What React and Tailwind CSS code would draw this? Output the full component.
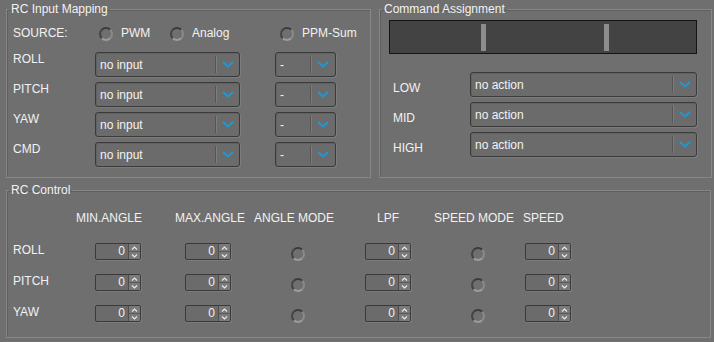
import React from 'react';

const font = { fontFamily: '"Liberation Sans", Arial, sans-serif' };

const Chevron = () => (
  <svg width="12" height="7" viewBox="0 0 12 7" className="block">
    <path d="M1 1 L6 5.5 L11 1" fill="none" stroke="#1c9ad8" strokeWidth="2" />
  </svg>
);

const Select = ({ value, w, arrowW = 23 }) => (
  <div className={`flex h-[25px] ${w} shrink-0 items-center rounded-[3px] border border-[#3a3a3a] bg-[#6b6b6b] shadow-[inset_1px_1px_0_#626262,1px_1px_0_#7c7c7c]`}>
    <span className="flex-1 truncate pl-[4px] pt-[1px] leading-[15px]">{value}</span>
    <div className="h-[17px] w-px bg-[#555] shadow-[1px_0_0_#7d7d7d]" />
    <div className="flex h-full items-center justify-center" style={{ width: arrowW }}>
      <Chevron />
    </div>
  </div>
);

const Radio = () => (
  <div className="h-[14px] w-[14px] shrink-0 rounded-full border-2 border-t-[#3c3c3c] border-l-[#444] border-r-[#8a8a8a] border-b-[#9c9c9c]" />
);

const Spin = () => (
  <div className="flex h-[17px] w-[46px] items-stretch rounded-[2px] border border-[#3a3a3a] bg-[#6b6b6b] shadow-[1px_1px_0_#7c7c7c]">
    <span className="flex-1 pr-[3px] text-right leading-[15px]">0</span>
    <div className="w-px bg-[#4e4e4e]" />
    <div className="flex w-[11px] flex-col">
      <div className="flex flex-1 items-center justify-center bg-[#7a7a7a] border-b border-[#5a5a5a]">
        <svg width="7" height="4" viewBox="0 0 7 4"><path d="M1 3.5 L3.5 1 L6 3.5" fill="none" stroke="#e8e8e8" strokeWidth="1.2" /></svg>
      </div>
      <div className="flex flex-1 items-center justify-center bg-[#7a7a7a]">
        <svg width="7" height="4" viewBox="0 0 7 4"><path d="M1 0.5 L3.5 3 L6 0.5" fill="none" stroke="#e8e8e8" strokeWidth="1.2" /></svg>
      </div>
    </div>
  </div>
);

const Group = ({ title, className, children }) => (
  <fieldset className={`border border-[#878787] shadow-[inset_1px_1px_0_#5f5f5f] ${className}`}>
    <legend className="ml-[2px] px-[2px] leading-[16px]">{title}</legend>
    {children}
  </fieldset>
);

const inputs = ['ROLL', 'PITCH', 'YAW', 'CMD'];
const axes = ['ROLL', 'PITCH', 'YAW'];

export default function App() {
  return (
    <div className="h-[342px] w-[714px] overflow-hidden bg-[#6f6f6f] pl-[6px] pt-[1px] text-[12px] text-[#f2f2f2]" style={font}>
      <div className="flex gap-[8px]">
        <Group title="RC Input Mapping" className="h-[177px] w-[365px]">
          <div className="pl-[6px] pt-[9px]">
            <div className="flex h-[15px] items-center leading-[15px]">
              <span className="w-[86px]">SOURCE:</span>
              <div className="flex w-[71px] items-center gap-[8px]"><Radio /><span>PWM</span></div>
              <div className="flex w-[110px] items-center gap-[8px]"><Radio /><span>Analog</span></div>
              <div className="flex items-center gap-[8px]"><Radio /><span>PPM-Sum</span></div>
            </div>
            <div className="mt-[11px] flex flex-col gap-[5px]">
              {inputs.map(r => (
                <div key={r} className="flex items-start">
                  <span className="w-[82px] leading-[15px]">{r}</span>
                  <Select value="no input" w="w-[145px]" />
                  <div className="w-[35px]" />
                  <Select value="-" w="w-[61px]" arrowW={24} />
                </div>
              ))}
            </div>
          </div>
        </Group>
        <Group title="Command Assignment" className="h-[177px] w-[333px]">
          <div className="pl-[9px] pt-[3px]">
            <div className="flex h-[34px] w-[308px] border border-[#141414] bg-[#434343] pt-[3px]">
              <div className="ml-[91px] h-[27px] w-[5px] bg-[#8d8d8d]" />
              <div className="ml-[118px] h-[27px] w-[5px] bg-[#8d8d8d]" />
            </div>
            <div className="mt-[18px] flex flex-col gap-[5px]">
              {['LOW', 'MID', 'HIGH'].map(r => (
                <div key={r} className="flex items-start">
                  <span className="mt-[9px] w-[81px] pl-[4px] leading-[15px]">{r}</span>
                  <Select value="no action" w="w-[227px]" />
                </div>
              ))}
            </div>
          </div>
        </Group>
      </div>
      <Group title="RC Control" className="mt-[4px] h-[156px] w-[705px]">
        <div className="pl-[6px] pt-[13px]">
          <div className="grid grid-cols-[63px_99px_79px_111px_69px_89px_48px] leading-[15px]">
            <span />
            <span>MIN.ANGLE</span>
            <span>MAX.ANGLE</span>
            <span>ANGLE MODE</span>
            <span className="pl-[12px]">LPF</span>
            <span>SPEED MODE</span>
            <span>SPEED</span>
          </div>
          <div className="mt-[17px] flex flex-col gap-[13px]">
            {axes.map(r => (
              <div key={r} className="grid grid-cols-[63px_99px_79px_111px_69px_89px_48px] items-start">
                <span className="leading-[15px]">{r}</span>
                <div className="ml-[19px]"><Spin /></div>
                <div className="ml-[10px]"><Spin /></div>
                <div className="ml-[37px] mt-[4px]"><Radio /></div>
                <div><Spin /></div>
                <div className="ml-[37px] mt-[4px]"><Radio /></div>
                <div className="ml-[2px]"><Spin /></div>
              </div>
            ))}
          </div>
        </div>
      </Group>
    </div>
  );
}
